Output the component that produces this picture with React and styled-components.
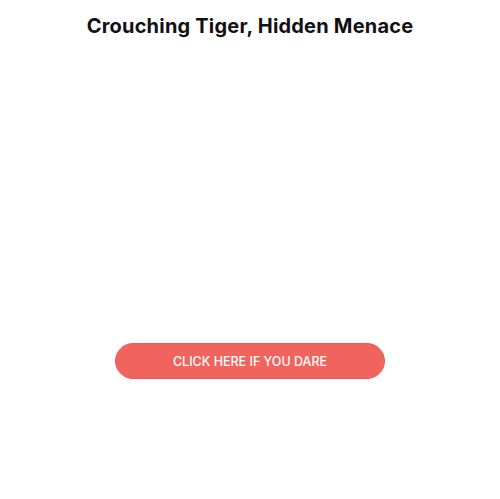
import React from 'react';
import styled, { createGlobalStyle } from 'styled-components';

const GlobalStyle = createGlobalStyle`
  body {
    margin: 0;
    background: #ffffff;
    font-family: Inter, "Noto Sans", sans-serif;
  }
`;

const Page = styled.div`
  width: 500px;
  height: 499px;
  display: flex;
  flex-direction: column;
  align-items: center;
`;

const Title = styled.h1`
  margin: 14px 0 0;
  font-size: 20px;
  font-weight: 700;
  color: #111111;
  letter-spacing: 0.2px;
  line-height: 24px;
`;

const Stage = styled.div`
  flex: 0 0 305px;
`;

const DareButton = styled.button`
  width: 270px;
  height: 36px;
  border: 1px solid #ee5a55;
  border-radius: 18px;
  background: #f1645e;
  color: #ffffff;
  font-family: Inter, "Noto Sans", sans-serif;
  font-size: 12.5px;
  font-weight: 500;
  text-transform: uppercase;
  cursor: pointer;
`;

export default function App() {
  return (
    <>
      <GlobalStyle />
      <Page>
        <Title>Crouching Tiger, Hidden Menace</Title>
        <Stage />
        <DareButton>Click here if you dare</DareButton>
      </Page>
    </>
  );
}
